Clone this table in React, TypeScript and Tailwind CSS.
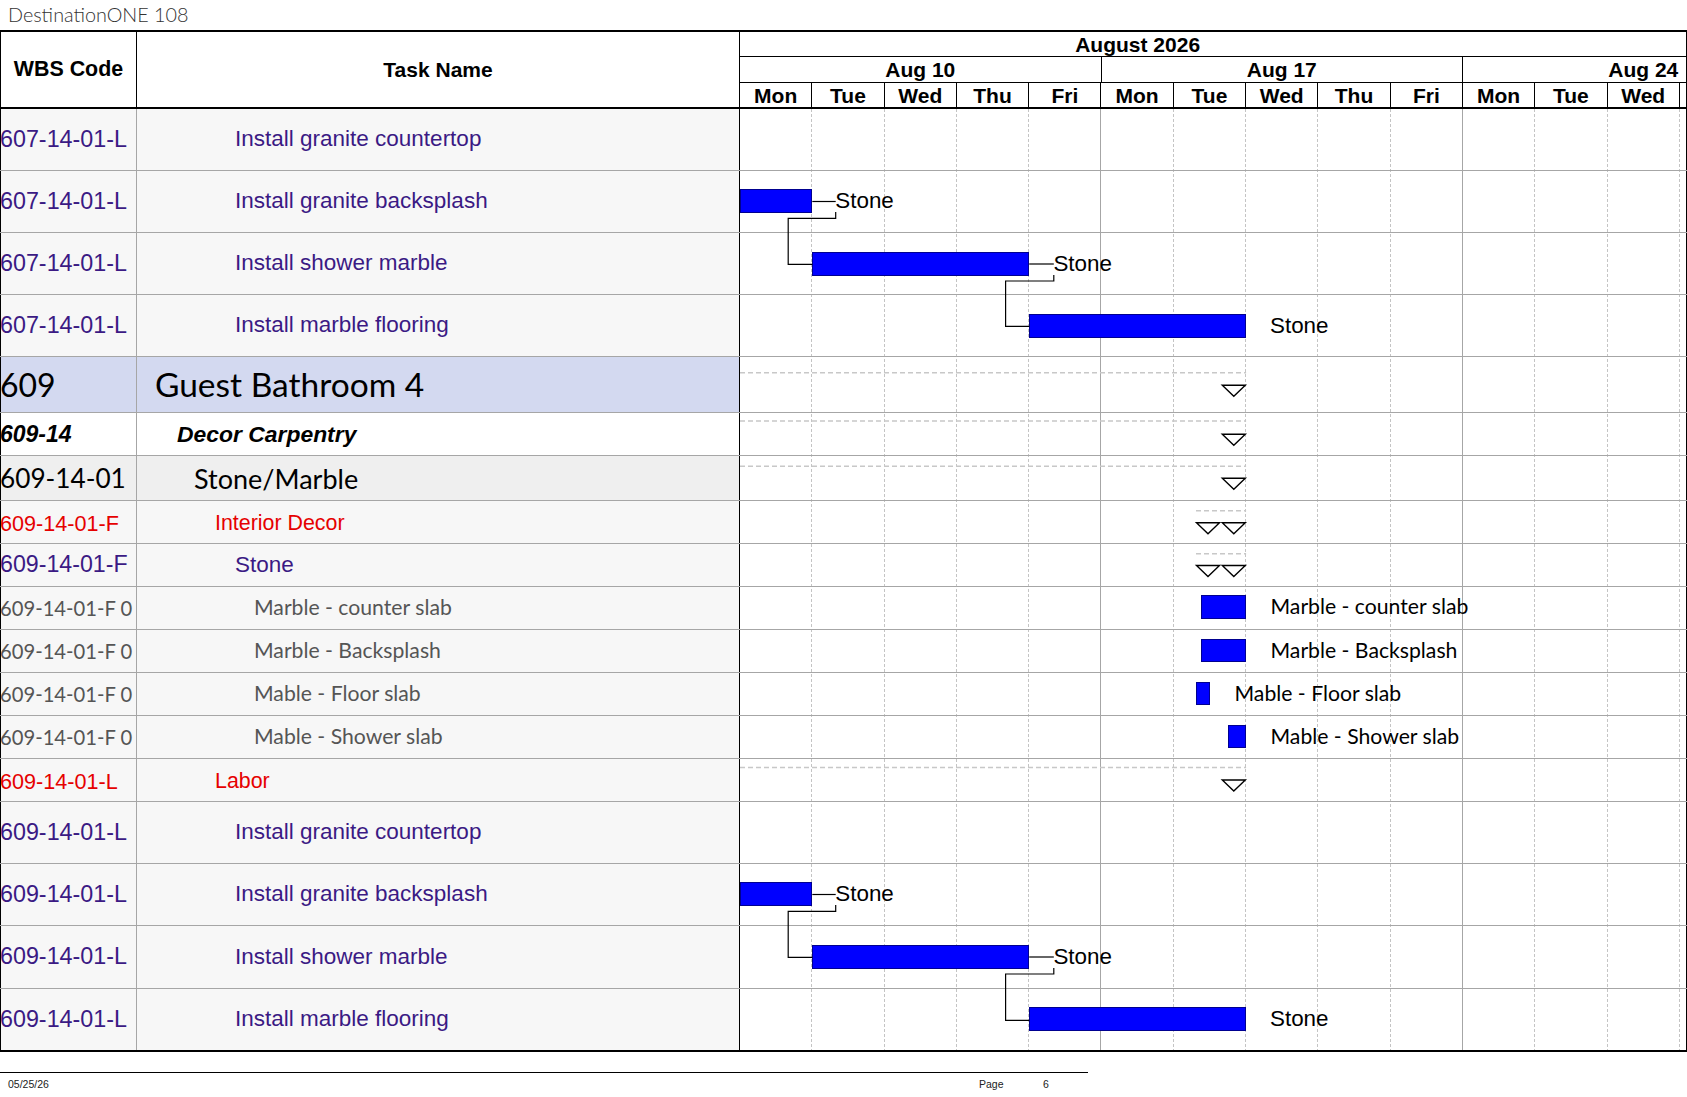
import React from 'react';

const DAY = 72.3;
const ARIAL = "font-['Liberation_Sans',Arial,sans-serif]";
const CAL = "font-['Lato','Noto_Sans',sans-serif]";

type Kind = 'labor' | 'room' | 'group' | 'sub' | 'cat' | 'catp' | 'item';

const KIND: Record<Kind, { code: string; text: string; bg: string; pad: string }> = {
  labor: {
    code: "font-['Liberation_Sans',Arial,sans-serif] text-[23.3px] text-[#3b1a84]",
    text: "font-['Liberation_Sans',Arial,sans-serif] text-[22.5px] text-[#3b1a84]",
    bg: 'bg-[#f7f7f7]',
    pad: 'pl-[98px]',
  },
  room: {
    code: "font-['Lato','Noto_Sans',sans-serif] text-[32px] text-black",
    text: "font-['Lato','Noto_Sans',sans-serif] text-[33.5px] text-black",
    bg: 'bg-[#d3d9f0]',
    pad: 'pl-[18px]',
  },
  group: {
    code: "font-['Liberation_Sans',Arial,sans-serif] text-[23px] font-bold italic text-black",
    text: "font-['Liberation_Sans',Arial,sans-serif] text-[22.9px] font-bold italic text-black",
    bg: 'bg-white',
    pad: 'pl-[40px]',
  },
  sub: {
    code: "font-['Lato','Noto_Sans',sans-serif] text-[26.2px] text-black",
    text: "font-['Lato','Noto_Sans',sans-serif] text-[27px] text-black",
    bg: 'bg-[#efefef]',
    pad: 'pl-[57px]',
  },
  cat: {
    code: "font-['Liberation_Sans',Arial,sans-serif] text-[21.6px] text-[#e60000] translate-y-[1.5px]",
    text: "font-['Liberation_Sans',Arial,sans-serif] text-[21.4px] text-[#e60000] translate-y-[1.5px]",
    bg: 'bg-[#f7f7f7]',
    pad: 'pl-[78px]',
  },
  catp: {
    code: "font-['Liberation_Sans',Arial,sans-serif] text-[23.2px] text-[#3b1a84]",
    text: "font-['Liberation_Sans',Arial,sans-serif] text-[22.5px] text-[#3b1a84]",
    bg: 'bg-[#f7f7f7]',
    pad: 'pl-[98px]',
  },
  item: {
    code: "font-['Lato','Noto_Sans',sans-serif] text-[20.2px] text-[#555555]",
    text: "font-['Lato','Noto_Sans',sans-serif] text-[21.2px] text-[#555555]",
    bg: 'bg-[#f7f7f7]',
    pad: 'pl-[117px]',
  },
};

type Bar = { x1: number; x2: number; y: number; h: number };
type Label = { text: string; x: number; cal?: boolean };
type Summary = { x1: number; y: number; tris: number[]; triY: number };

type Row = {
  h: string;
  wbs: string;
  task: string;
  kind: Kind;
  bar?: Bar;
  label?: Label;
  summary?: Summary;
};

const END = 506.1;

// the lower block sits a hair taller in the print, so its last two rows get an extra pixel
const laborRows = (prefix: string, tall?: boolean): Row[] => [
  { h: 'h-[62px]', wbs: prefix, task: 'Install granite countertop', kind: 'labor' },
  {
    h: 'h-[62px]', wbs: prefix, task: 'Install granite backsplash', kind: 'labor',
    bar: { x1: 0, x2: DAY, y: 18.3, h: 24 },
    label: { text: 'Stone', x: 95.3 },
  },
  {
    h: tall ? 'h-[63px]' : 'h-[62px]', wbs: prefix, task: 'Install shower marble', kind: 'labor',
    bar: { x1: DAY, x2: DAY * 4, y: 19, h: 23.5 },
    label: { text: 'Stone', x: 313.4 },
  },
  {
    h: tall ? 'h-[63px]' : 'h-[62px]', wbs: prefix, task: 'Install marble flooring', kind: 'labor',
    bar: { x1: DAY * 4, x2: END, y: tall ? 18.3 : 19.3, h: 23.5 },
    label: { text: 'Stone', x: 530 },
  },
];

const middleRows: Row[] = [
  { h: 'h-[56px]', wbs: '609', task: 'Guest Bathroom 4', kind: 'room', summary: { x1: 0, y: 15.7, tris: [482.3], triY: 28.3 } },
  { h: 'h-[43px]', wbs: '609-14', task: 'Decor Carpentry', kind: 'group', summary: { x1: 0, y: 8, tris: [482.3], triY: 21.3 } },
  { h: 'h-[45px]', wbs: '609-14-01', task: 'Stone/Marble', kind: 'sub', summary: { x1: 0, y: 10.3, tris: [482.3], triY: 22.3 } },
  { h: 'h-[43px]', wbs: '609-14-01-F', task: 'Interior Decor', kind: 'cat', summary: { x1: 456, y: 9.7, tris: [456.5, 482.3], triY: 21.7 } },
  { h: 'h-[43px]', wbs: '609-14-01-F', task: 'Stone', kind: 'catp', summary: { x1: 456, y: 9.7, tris: [456.5, 482.3], triY: 21.5 } },
  {
    h: 'h-[43px]', wbs: '609-14-01-F 0', task: 'Marble - counter slab', kind: 'item',
    bar: { x1: 461, x2: END, y: 8.3, h: 23.3 }, label: { text: 'Marble - counter slab', x: 530.5, cal: true },
  },
  {
    h: 'h-[43px]', wbs: '609-14-01-F 0', task: 'Marble - Backsplash', kind: 'item',
    bar: { x1: 461, x2: END, y: 9, h: 23.4 }, label: { text: 'Marble - Backsplash', x: 530.5, cal: true },
  },
  {
    h: 'h-[43px]', wbs: '609-14-01-F 0', task: 'Mable - Floor slab', kind: 'item',
    bar: { x1: 456, x2: 470, y: 9, h: 23.4 }, label: { text: 'Mable - Floor slab', x: 494.5, cal: true },
  },
  {
    h: 'h-[43px]', wbs: '609-14-01-F 0', task: 'Mable - Shower slab', kind: 'item',
    bar: { x1: 488, x2: END, y: 9, h: 23.4 }, label: { text: 'Mable - Shower slab', x: 530.5, cal: true },
  },
  { h: 'h-[43px]', wbs: '609-14-01-L', task: 'Labor', kind: 'cat', summary: { x1: 0, y: 8.4, tris: [482.3], triY: 21 } },
];

const DAYS = ['Mon', 'Tue', 'Wed', 'Thu', 'Fri', 'Mon', 'Tue', 'Wed', 'Thu', 'Fri', 'Mon', 'Tue', 'Wed'];

function ChartCell({ row }: { row: Row }) {
  const { bar, label, summary } = row;
  return (
    <div className="relative flex-1 border-r border-black">
      {summary && (
        <svg className="absolute inset-0 h-full w-full" width="946" height="60">
          <line
            x1={summary.x1}
            x2={END}
            y1={summary.y}
            y2={summary.y}
            stroke="#c8c8c8"
            strokeWidth="1.5"
            strokeDasharray="5 3"
          />
          {summary.tris.map((x) => (
            <polygon
              key={x}
              points={`${x},${summary.triY} ${x + 23},${summary.triY} ${x + 11.5},${summary.triY + 11}`}
              fill="white"
              stroke="black"
              strokeWidth="1.4"
            />
          ))}
        </svg>
      )}
      {bar && (
        <div
          className="absolute bg-[#0000ff] border border-[#000090]"
          style={{ left: bar.x1, top: bar.y, width: bar.x2 - bar.x1, height: bar.h }}
        />
      )}
      {bar && label && (
        <span
          className={`absolute -translate-y-1/2 whitespace-nowrap leading-none text-black ${
            label.cal ? "font-['Lato','Noto_Sans',sans-serif] text-[21.2px]" : "font-['Liberation_Sans',Arial,sans-serif] text-[22.4px]"
          }`}
          style={{ left: label.x, top: bar.y + bar.h / 2 }}
        >
          {label.text}
        </span>
      )}
    </div>
  );
}

function TableRow({ row, last }: { row: Row; last?: boolean }) {
  const k = KIND[row.kind];
  return (
    <div className={`relative flex ${row.h} ${last ? 'border-b-2 border-black' : 'border-b border-[#a6a6a6]'}`}>
      <div className={`flex w-[137px] shrink-0 items-center overflow-hidden whitespace-nowrap border-l border-r border-l-black border-r-[#a6a6a6] ${k.bg}`}>
        <span className={`-ml-[1px] leading-none ${k.code}`}>{row.wbs}</span>
      </div>
      <div className={`flex w-[603px] shrink-0 items-center whitespace-nowrap border-r border-black ${k.bg} ${k.pad}`}>
        <span className={`leading-none ${k.text}`}>{row.task}</span>
      </div>
      <ChartCell row={row} />
    </div>
  );
}

function LaborGroup({ prefix, last }: { prefix: string; last?: boolean }) {
  const rows = laborRows(prefix, last);
  const d = last ? 1 : 0;
  return (
    <div className="relative">
      {rows.map((r, i) => (
        <TableRow key={i} row={r} last={last && i === rows.length - 1} />
      ))}
      <svg className="pointer-events-none absolute left-[740px] top-0 h-[250px] w-[946px]" width="946" height="250">
        <g fill="none" stroke="black" strokeWidth="1.2">
          <path d={`M${DAY} 92.5 H95.7`} />
          <path d={`M95.7 103 V109.3 H48.2 V155.3 H${DAY}`} />
          <path d={`M${DAY * 4} 155 H313.8`} />
          <path d={`M313.8 166 V172 H265.6 V${217.3 + d} H${DAY * 4}`} />
        </g>
      </svg>
    </div>
  );
}

function GridLayer() {
  return (
    <div className="absolute bottom-0 left-[740px] top-0 flex w-[946px]">
      {DAYS.map((d, i) => (
        <div
          key={i}
          className={`h-full w-[72.3px] shrink-0 border-r ${
            (i + 1) % 5 === 0 ? 'border-solid border-[#a6a6a6]' : 'border-dashed border-[#c4c4c4]'
          }`}
        />
      ))}
    </div>
  );
}

function Header() {
  return (
    <div className={`flex h-[79px] border-b-2 border-t-2 border-black ${ARIAL} font-bold text-[21px] text-black`}>
      <div className="flex w-[137px] shrink-0 items-center justify-center border-l border-r border-black text-[21.4px]">WBS Code</div>
      <div className="flex w-[603px] shrink-0 items-center justify-center border-r border-black">Task Name</div>
      <div className="flex w-[947px] shrink-0 flex-col border-r border-black">
        <div className="flex h-[25px] overflow-hidden border-b border-black">
          <div className="-ml-[361.5px] flex w-[1518.3px] shrink-0 items-center justify-center leading-none">August 2026</div>
        </div>
        <div className="flex h-[26px] overflow-hidden border-b border-black">
          {['Aug 10', 'Aug 17', 'Aug 24'].map((w) => (
            <div key={w} className="flex w-[361.5px] shrink-0 items-center justify-center border-r border-black leading-none">
              {w}
            </div>
          ))}
        </div>
        <div className="flex h-[24px] overflow-hidden">
          {DAYS.map((d, i) => (
            <div key={i} className="flex w-[72.3px] shrink-0 items-center justify-center border-r border-black leading-none">
              {d}
            </div>
          ))}
        </div>
      </div>
    </div>
  );
}

export default function App() {
  return (
    <div className="h-[1097px] w-[1687px] overflow-hidden bg-white">
      <div className={`flex h-[30px] items-center pl-[8px] ${CAL} font-light text-[19.8px] text-[#333333]`}>
        DestinationONE 108
      </div>
      <Header />
      <div className="relative">
        <GridLayer />
        <LaborGroup prefix="607-14-01-L" />
        {middleRows.map((r, i) => (
          <TableRow key={i} row={r} />
        ))}
        <LaborGroup prefix="609-14-01-L" last />
      </div>
      <div className="mt-[20px] w-[1088px] border-t border-black" />
      <div className={`mt-[6px] flex items-center ${ARIAL} text-[10.5px] leading-none text-[#222222]`}>
        <span className="w-[979px] shrink-0 pl-[8px]">05/25/26</span>
        <span className="w-[64px] shrink-0">Page</span>
        <span>6</span>
      </div>
    </div>
  );
}
